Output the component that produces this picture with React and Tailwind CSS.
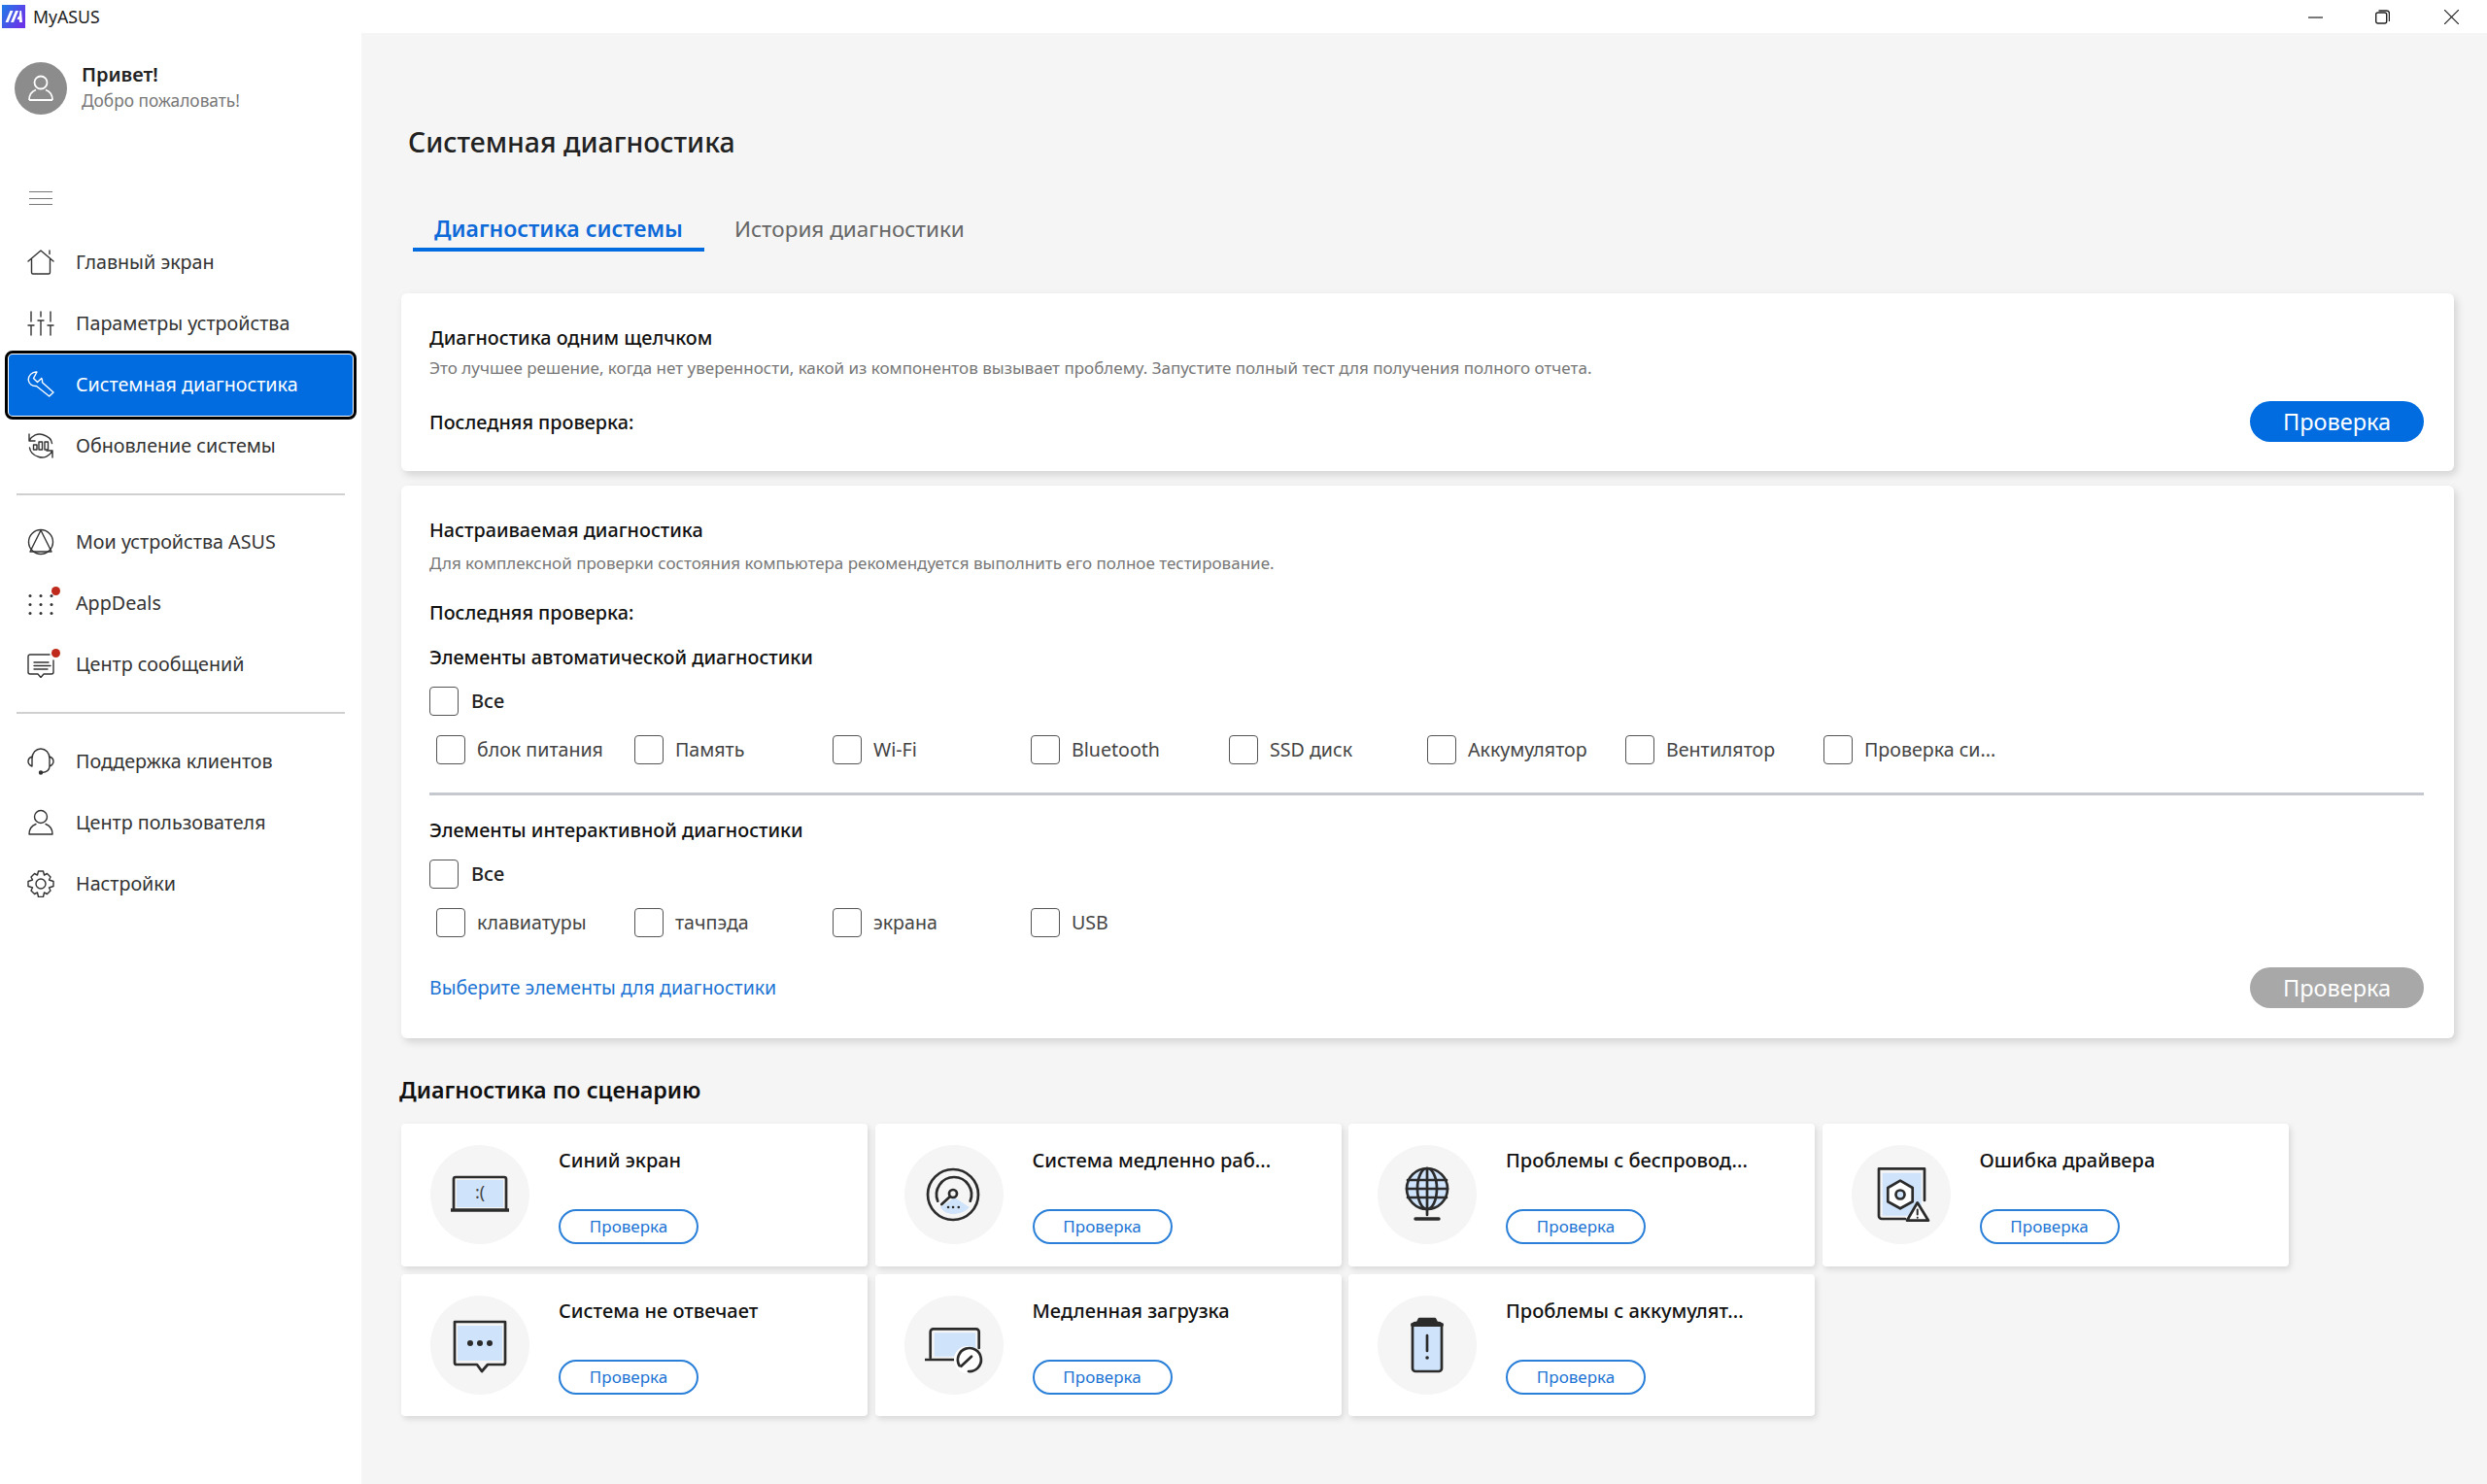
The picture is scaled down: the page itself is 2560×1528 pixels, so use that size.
import clsx from 'clsx';

// Sidebar icons, 28x28 drawn with a thin stroke
const stroke = { fill: 'none', stroke: 'currentColor', strokeWidth: 1.4, strokeLinecap: 'round', strokeLinejoin: 'round' };

function NavIcon({ children }) {
  return <svg className="block" width="28" height="28" viewBox="0 0 28 28" {...stroke}>{children}</svg>;
}

const RedDot = ({ className }) => (
  <span className={clsx('absolute right-[-6px] h-[9px] w-[9px] rounded-full bg-[#bf2a1c]', className)} />
);

const HomeIcon = () => (
  <NavIcon><path d="M1 13 14 2l13 11M4.500 11v13.500a1.500 1.500 0 0 0 1.500 1.500h16a1.500 1.500 0 0 0 1.500-1.500V11M23 5.500V2" /></NavIcon>
);
const SlidersIcon = () => (
  <NavIcon><path d="M4 2v10M14 2v5M24 2v10M1 16h6M11 11h6M21 16h6M4 16v10M14 11v15M24 16v10" /></NavIcon>
);
const WrenchIcon = () => (
  <NavIcon><path d="M10 1C5 .5.800 5 1.300 9.500 1.700 13 5 16 9.500 15.500L22.700 26 27 22 15.500 11.800C15.800 10.500 15.500 9 14.800 7.500L10.500 11.500 6.500 7.500z" /></NavIcon>
);
const UpdateIcon = () => (
  <NavIcon>
    <path d="M2 2v7h6M2 9c3-6 9-8 14-6.500 5 1.500 9 5 9.500 9M26 26v-7h-6M26 19c-3 6-9 8-14 6.500C7 24 3 20.500 2.500 16" />
    <rect x="6.500" y="13" width="3.500" height="5" /><rect x="12" y="10" width="3.500" height="8" /><rect x="18" y="10" width="3.500" height="8" />
  </NavIcon>
);
const DevicesIcon = () => (
  <NavIcon><circle cx="14" cy="14" r="12.500" /><path d="M14 2 3 24h22z" /></NavIcon>
);
const DealsIcon = () => (
  <span className="relative block">
    <NavIcon>
      <g fill="currentColor" stroke="none">
        {[6.5, 15.5, 24.5].flatMap((y) => [3, 14, 25].map((x) => <circle key={`${x}-${y}`} cx={x} cy={y} r="1.500" />))}
      </g>
    </NavIcon>
    <RedDot className="top-[-3px]" />
  </span>
);
const MessageIcon = () => (
  <span className="relative block">
    <NavIcon><path d="M23 4H3a2 2 0 0 0-2 2v16a2 2 0 0 0 2 2h8l3 3.500 3-3.500h8a2 2 0 0 0 2-2V10M7 12h15M7 15.500h17M7 19h14" /></NavIcon>
    <RedDot className="top-[-2px]" />
  </span>
);
const SupportIcon = () => (
  <NavIcon><path d="M5 19V11C5 5 9 1 14 1s9 4 9 10v8c0 4-3 6-8 6.500M5 9C2.500 10 1 12 1 14s1.500 4 4 5M23 9c2.500 1 4 3 4 5s-1.500 4-4 5" /><circle cx="14" cy="25.500" r="1.500" fill="currentColor" /></NavIcon>
);
const UserIcon = () => (
  <NavIcon><circle cx="14" cy="8" r="6.500" /><path d="M2 26c0-6 3-9 7-10.500M26 26c0-6-3-9-7-10.500M2 26h24" /></NavIcon>
);
const GearIcon = () => (
  <NavIcon>
    <circle cx="14" cy="14" r="5" />
    <path d="M11.500 1h5l1 4 3-1.500 3.500 3.500L22.500 10l4.500 1.500v5l-4.500 1.500 1.500 3-3.500 3.500-3-1.500-1 4.500h-5l-1-4.500-3 1.500L4 21l1.500-3L1 16.500v-5L5.500 10 4 7l3.500-3.500 3 1.500z" />
  </NavIcon>
);

const NAV_GROUPS = [
  [
    { label: 'Главный экран', Icon: HomeIcon },
    { label: 'Параметры устройства', Icon: SlidersIcon },
    { label: 'Системная диагностика', Icon: WrenchIcon, active: true },
    { label: 'Обновление системы', Icon: UpdateIcon },
  ],
  [
    { label: 'Мои устройства ASUS', Icon: DevicesIcon },
    { label: 'AppDeals', Icon: DealsIcon },
    { label: 'Центр сообщений', Icon: MessageIcon },
  ],
  [
    { label: 'Поддержка клиентов', Icon: SupportIcon },
    { label: 'Центр пользователя', Icon: UserIcon },
    { label: 'Настройки', Icon: GearIcon },
  ],
];

function NavRow({ item }) {
  const { label, Icon, active } = item;
  return (
    <div className={clsx('relative flex h-[63px] items-center gap-[22px] px-[28px] text-[19.7px]', active ? 'text-white' : 'text-[#333333]')}>
      {active && (
        <span className="absolute bottom-[-5px] left-[5px] right-[5px] top-[-3px] rounded-[8px] border-[3px] border-black bg-white p-[1px]">
          <span className="block h-full w-full rounded-[4px] bg-[#006ce0]" />
        </span>
      )}
      <span className="relative"><Icon /></span>
      <span className="relative whitespace-nowrap">{label}</span>
    </div>
  );
}

function Sidebar() {
  return (
    <aside className="w-[372px] shrink-0 bg-white">
      <div className="ml-[15px] mt-[30px] flex h-[54px] items-center gap-[15px]">
        <span className="flex h-[54px] w-[54px] items-center justify-center rounded-full bg-[#8c8c8c]">
          <svg width="28" height="28" viewBox="0 0 28 28" fill="none" stroke="white" strokeWidth="1.800" strokeLinejoin="round">
            <circle cx="14" cy="8" r="6.500" />
            <path d="M2 26c0-6 3-9 7-10.500M26 26c0-6-3-9-7-10.500M2 26h24" />
          </svg>
        </span>
        <div className="-mt-[3px]">
          <div className="text-[20px] font-semibold leading-[28px] text-[#222222]">Привет!</div>
          <div className="text-[17.3px] leading-[26px] text-[#777777]">Добро пожаловать!</div>
        </div>
      </div>

      <div className="ml-[30px] mt-[79px] flex h-[14px] w-[24px] flex-col justify-between">
        <span className="h-[1px] bg-[#777777]" />
        <span className="h-[1px] bg-[#777777]" />
        <span className="h-[1px] bg-[#777777]" />
      </div>

      <nav className="mt-[27px]">
        {NAV_GROUPS.map((group, i) => (
          <div key={i}>
            {i > 0 && <div className={clsx('mx-[17px] h-[2px] bg-[#d0d0d0]', i === 1 ? 'mb-[16px] mt-[18px]' : 'mb-[17px] mt-[18px]')} />}
            {group.map((item) => <NavRow key={item.label} item={item} />)}
          </div>
        ))}
      </nav>
    </aside>
  );
}

function Checkbox() {
  return <span className="block h-[30px] w-[30px] shrink-0 rounded-[4px] border-[1.5px] border-[#555555] bg-white" />;
}

function CheckRow({ items }) {
  return (
    <div className="flex pl-[7px]">
      {items.map((label) => (
        <div key={label} className="flex h-[30px] w-[204px] items-center gap-[12px]">
          <Checkbox />
          <span className="whitespace-nowrap text-[19.6px] text-[#444444]">{label}</span>
        </div>
      ))}
    </div>
  );
}

function AllRow({ className }) {
  return (
    <div className={clsx('flex h-[30px] items-center gap-[13px]', className)}>
      <Checkbox />
      <span className="text-[20px] font-medium text-[#222222]">Все</span>
    </div>
  );
}

function BigButton({ disabled = false }) {
  return (
    <div className={clsx('flex h-[42px] w-[179px] items-center justify-center rounded-full pt-[1px] text-[23.5px] text-white', disabled ? 'bg-[#a8a8a8]' : 'bg-[#006ce0]')}>
      Проверка
    </div>
  );
}

// Scenario pictures: dark outline over a pale blue fill, 64x64
const SCENE = { fill: 'none', stroke: '#2b2b2b', strokeWidth: 2.700, strokeLinejoin: 'round', strokeLinecap: 'round' };
const PALE = '#cfe3fb';

const LaptopScene = () => (
  <svg width="64" height="64" viewBox="0 0 64 64" {...SCENE}>
    <rect x="8" y="17" width="48" height="28" fill={PALE} stroke="none" />
    <path d="M5 46V16a2 2 0 0 1 2-2h50a2 2 0 0 1 2 2v30" />
    <path d="M2 48h60" strokeWidth="3.500" strokeLinecap="butt" />
    <text x="32" y="36" fontSize="18" fontFamily="Noto Sans, sans-serif" textAnchor="middle" fill="#444444" stroke="none">:(</text>
  </svg>
);
const GaugeScene = () => (
  <svg width="64" height="64" viewBox="0 0 64 64" {...SCENE}>
    <path d="M32.700 35 18 45c3 5 8 7 13 7s13-2 16.700-7z" fill={PALE} stroke="none" />
    <circle cx="31" cy="32" r="26" />
    <path d="M15.300 38.700A18 18 0 1 1 48.700 38.700" />
    <circle cx="31" cy="31" r="4" />
    <path d="M27.700 34.300 19.300 42" />
    <path d="M26 45h.1M31 45h.1M36.700 45h.1" strokeWidth="2.500" />
  </svg>
);
const GlobeScene = () => (
  <svg width="64" height="64" viewBox="0 0 64 64" {...SCENE}>
    <circle cx="32" cy="26" r="21" fill={PALE} />
    <ellipse cx="32" cy="26" rx="10" ry="21" />
    <path d="M32 5v48M12 17h40M12 35h40M11 26h42" />
    <path d="M20 57h24" strokeWidth="3.500" />
  </svg>
);
const DriverScene = () => (
  <svg width="64" height="64" viewBox="0 0 64 64" {...SCENE}>
    <rect x="12.700" y="9.700" width="40" height="44" fill={PALE} stroke="none" />
    <path d="M36 57H12a3 3 0 0 1-3-3V5.300h47V38" />
    <path d="M31 17.700 43.700 25v14.300L31 46.300 18.300 39.300V25z" fill="white" />
    <circle cx="31" cy="32" r="4.500" fill={PALE} />
    <path d="M48.700 40.300 60 58.700H38z" fill="white" />
    <path d="M48.700 47.500v5M48.700 55.700h.1" strokeWidth="2" />
  </svg>
);
const ChatScene = () => (
  <svg width="64" height="64" viewBox="0 0 64 64" {...SCENE}>
    <rect x="9" y="12" width="46" height="36" fill={PALE} stroke="none" />
    <path d="M6 8h52v42a2 2 0 0 1-2 2H40l-6 7-5-7H8a2 2 0 0 1-2-2z" />
    <g fill="#2b2b2b" stroke="none"><circle cx="22" cy="30" r="3" /><circle cx="32" cy="30" r="3" /><circle cx="42" cy="30" r="3" /></g>
  </svg>
);
const BootScene = () => (
  <svg width="64" height="64" viewBox="0 0 64 64" {...SCENE}>
    <rect x="11.700" y="19.300" width="42.600" height="24.400" fill={PALE} stroke="none" />
    <path d="M7.700 45V18.300a3 3 0 0 1 3-3h44a3 3 0 0 1 3 3V35" />
    <path d="M2 47h32.300" strokeLinecap="butt" />
    <circle cx="46" cy="47" r="14" fill="white" stroke="none" />
    <path d="M37.500 53A12 12 0 1 1 47 59" />
    <path d="M50 43.700 39.300 53.700" />
  </svg>
);
const BatteryScene = () => (
  <svg width="64" height="64" viewBox="0 0 64 64" {...SCENE}>
    <rect x="17" y="9" width="30" height="50" rx="3" fill={PALE} />
    <path d="M24 5h16l2 4H22z" fill="#2b2b2b" />
    <path d="M17 11h30" strokeWidth="4" />
    <path d="M32 22v16" />
    <path d="M32 45h.1" strokeWidth="3.500" />
  </svg>
);

const SCENARIOS = [
  { title: 'Синий экран', Scene: LaptopScene },
  { title: 'Система медленно раб...', Scene: GaugeScene },
  { title: 'Проблемы с беспровод...', Scene: GlobeScene },
  { title: 'Ошибка драйвера', Scene: DriverScene },
  { title: 'Система не отвечает', Scene: ChatScene },
  { title: 'Медленная загрузка', Scene: BootScene },
  { title: 'Проблемы с аккумулят...', Scene: BatteryScene },
];

function ScenarioCard({ title, Scene }) {
  return (
    <div className="flex h-[146.5px] items-center gap-[30px] rounded-[4px] bg-white pl-[30px] shadow-[2px_3px_6px_rgba(0,0,0,0.12)]">
      <span className="flex h-[102px] w-[102px] shrink-0 items-center justify-center rounded-full bg-[#f5f5f5]">
        <Scene />
      </span>
      <div className="h-full pt-[24px]">
        <div className="h-[28px] whitespace-nowrap text-[20px] font-medium leading-[28px] text-[#111111]">{title}</div>
        <div className="mt-[36px] flex h-[36px] w-[144px] items-center justify-center rounded-full border-2 border-[#2a7fd8] text-[17px] text-[#1c74d4]">
          Проверка
        </div>
      </div>
    </div>
  );
}

function Card({ className, children }) {
  return <section className={clsx('w-[2113px] rounded-[6px] bg-white pl-[29px] pr-[31px] pt-[31px] shadow-[3px_4px_8px_rgba(0,0,0,0.14)]', className)}>{children}</section>;
}

const Heading = ({ className, children }) => (
  <div className={clsx('h-[28px] text-[19.8px] font-medium leading-[30px] text-[#111111]', className)}>{children}</div>
);
const Hint = ({ className, children }) => (
  <div className={clsx('h-[24px] text-[17px] leading-[24px] text-[#777777]', className)}>{children}</div>
);

function Main() {
  return (
    <main className="flex-1 bg-[#f5f5f5] pl-[41px] pt-[92px]">
      <h1 className="ml-[7px] h-[40px] text-[28.4px] font-medium leading-[40px] text-[#222222]">Системная диагностика</h1>

      <div className="ml-[12px] mt-[50px] flex h-[43px]">
        <div className="w-[300px] border-b-[4px] border-[#006ce0] text-center text-[23px] font-semibold leading-[38px] text-[#0e6ad8]">Диагностика системы</div>
        <div className="ml-[31px] text-[22.5px] leading-[40px] text-[#666666]">История диагностики</div>
      </div>

      <Card className="mt-[43px] h-[183px]">
        <Heading>Диагностика одним щелчком</Heading>
        <Hint className="mt-[6px]">Это лучшее решение, когда нет уверенности, какой из компонентов вызывает проблему. Запустите полный тест для получения полного отчета.</Hint>
        <div className="mt-[22px] flex h-[42px] items-center justify-between">
          <Heading>Последняя проверка:</Heading>
          <BigButton />
        </div>
      </Card>

      <Card className="mt-[15px] h-[569px]">
        <Heading>Настраиваемая диагностика</Heading>
        <Hint className="mt-[9px]">Для комплексной проверки состояния компьютера рекомендуется выполнить его полное тестирование.</Hint>
        <Heading className="mt-[24px]">Последняя проверка:</Heading>
        <Heading className="mt-[18px]">Элементы автоматической диагностики</Heading>
        <AllRow className="mt-[17px]" />
        <div className="mt-[20px]">
          <CheckRow items={['блок питания', 'Память', 'Wi-Fi', 'Bluetooth', 'SSD диск', 'Аккумулятор', 'Вентилятор', 'Проверка си...']} />
        </div>
        <div className="mt-[29px] h-[3px] bg-[#c5c8cf]" />
        <Heading className="mt-[21px]">Элементы интерактивной диагностики</Heading>
        <AllRow className="mt-[17px]" />
        <div className="mt-[20px]">
          <CheckRow items={['клавиатуры', 'тачпэда', 'экрана', 'USB']} />
        </div>
        <div className="mt-[31px] flex h-[42px] items-center justify-between">
          <span className="text-[19.5px] text-[#1c74d4]">Выберите элементы для диагностики</span>
          <BigButton disabled />
        </div>
      </Card>

      <h2 className="-ml-[2px] mt-[37px] h-[32px] text-[23.3px] font-semibold leading-[32px] text-[#111111]">Диагностика по сценарию</h2>

      <div className="mt-[19px] grid grid-cols-[repeat(4,480px)] gap-x-[7.5px] gap-y-[8px]">
        {SCENARIOS.map((s) => <ScenarioCard key={s.title} {...s} />)}
      </div>
    </main>
  );
}

function TitleBar() {
  return (
    <header className="flex h-[34px] items-center bg-white pr-[29px]">
      <svg className="ml-[2px]" width="24" height="24" viewBox="0 0 24 24">
        <defs>
          <linearGradient id="logo" x1="0" y1="0" x2="1" y2="0.6">
            <stop offset="0" stopColor="#1e7ce8" />
            <stop offset="1" stopColor="#6a35e8" />
          </linearGradient>
        </defs>
        <rect width="24" height="24" fill="url(#logo)" />
        <path d="M8.500 6h3L6.500 18h-3zM14 6h3l-5 12H9zM18.500 6H20l1 12h-3l-.2-3h-2.300l1.300-3h.8z" fill="white" />
      </svg>
      <span className="ml-[8px] text-[17.7px] text-[#222222]">MyASUS</span>
      <div className="ml-auto flex items-center text-[#222222]">
        <svg width="15" height="15" viewBox="0 0 15 15" fill="none" stroke="currentColor" strokeWidth="1.200"><path d="M0 8h15" /></svg>
        <svg className="ml-[54px]" width="15" height="15" viewBox="0 0 15 15" fill="none" stroke="currentColor" strokeWidth="1.400"><rect x="0.700" y="3" width="11" height="11" rx="2" /><path d="M3.500 1h8a3 3 0 0 1 3 3v8" /></svg>
        <svg className="ml-[56px]" width="15" height="15" viewBox="0 0 15 15" fill="none" stroke="currentColor" strokeWidth="1.200"><path d="M0 0l15 15M15 0 0 15" /></svg>
      </div>
    </header>
  );
}

export default function App() {
  return (
    <div className="flex h-[1528px] w-[2560px] flex-col overflow-hidden bg-white font-['Noto_Sans',sans-serif]">
      <TitleBar />
      <div className="flex min-h-0 flex-1">
        <Sidebar />
        <Main />
      </div>
    </div>
  );
}
